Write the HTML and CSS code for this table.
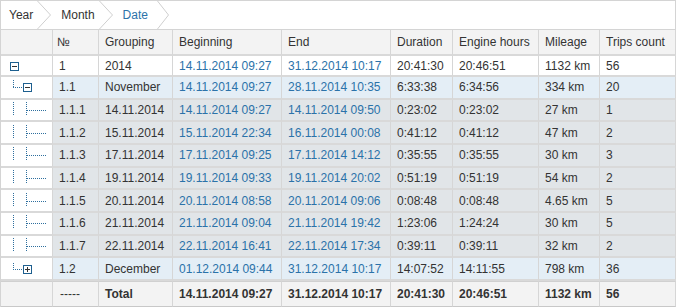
FILE: index.html
```html
<!DOCTYPE html>
<html>
<head>
<meta charset="utf-8">
<link rel="stylesheet" href="styles.css">
</head>
<body>
<div class="grid">
  <div class="crumbs">
    <span class="crumb first">Year</span>
    <svg class="chev" width="14" height="28" viewBox="0 0 14 28"><polyline points="0.5,0 13.5,14 0.5,28" fill="none" stroke="#cfcfcf" stroke-width="1"/></svg>
    <span class="crumb">Month</span>
    <svg class="chev" width="14" height="28" viewBox="0 0 14 28"><polyline points="0.5,0 13.5,14 0.5,28" fill="none" stroke="#cfcfcf" stroke-width="1"/></svg>
    <span class="crumb active">Date</span>
    <svg class="chev last" width="12" height="28" viewBox="0 0 12 28"><polyline points="0.5,0 11.5,14 0.5,28" fill="none" stroke="#cfcfcf" stroke-width="1"/></svg>
  </div>
  <table class="report">
    <thead>
      <tr>
        <th class="c-tree"></th>
        <th class="c-num">№</th>
        <th class="c-grp">Grouping</th>
        <th class="c-beg">Beginning</th>
        <th class="c-end">End</th>
        <th class="c-dur">Duration</th>
        <th class="c-eng">Engine hours</th>
        <th class="c-mil">Mileage</th>
        <th class="c-trp">Trips count</th>
      </tr>
    </thead>
    <tbody>
      <tr class="lvl0">
        <td class="tree"><svg class="tico" width="51" height="19" viewBox="0 0 51 19"><rect x="9.5" y="6.5" width="8" height="8" fill="#fff" stroke="#1d5f8f"/><line x1="11" y1="10.5" x2="16" y2="10.5" stroke="#333"/></svg></td>
        <td>1</td><td>2014</td>
        <td class="link">14.11.2014 09:27</td><td class="link">31.12.2014 10:17</td>
        <td>20:41:30</td><td>20:46:51</td><td>1132 km</td><td>56</td>
      </tr>
      <tr class="lvl1">
        <td class="tree"><svg class="tico" width="51" height="20" viewBox="0 0 51 20"><line x1="12.5" y1="3" x2="12.5" y2="11" stroke="#2e6f9e" stroke-dasharray="1 1"/><line x1="12" y1="10.5" x2="22" y2="10.5" stroke="#2e6f9e" stroke-dasharray="1 1"/><rect x="22.5" y="6.5" width="8" height="8" fill="#fff" stroke="#1d5f8f"/><line x1="24" y1="10.5" x2="29" y2="10.5" stroke="#333"/></svg></td>
        <td>1.1</td><td>November</td>
        <td class="link">14.11.2014 09:27</td><td class="link">28.11.2014 10:35</td>
        <td>6:33:38</td><td>6:34:56</td><td>334 km</td><td>20</td>
      </tr>
      <tr class="lvl2">
        <td class="tree"><svg class="tico" width="51" height="20" viewBox="0 0 51 20"><line x1="12.5" y1="2" x2="12.5" y2="16" stroke="#2e6f9e" stroke-dasharray="1 1"/><line x1="25.5" y1="2" x2="25.5" y2="16" stroke="#2e6f9e" stroke-dasharray="1 1"/><line x1="26" y1="10.5" x2="46" y2="10.5" stroke="#2e6f9e" stroke-dasharray="1 1"/></svg></td>
        <td>1.1.1</td><td>14.11.2014</td>
        <td class="link">14.11.2014 09:27</td><td class="link">14.11.2014 09:50</td>
        <td>0:23:02</td><td>0:23:02</td><td>27 km</td><td>1</td>
      </tr>
      <tr class="lvl2">
        <td class="tree"><svg class="tico" width="51" height="20" viewBox="0 0 51 20"><line x1="12.5" y1="2" x2="12.5" y2="16" stroke="#2e6f9e" stroke-dasharray="1 1"/><line x1="25.5" y1="2" x2="25.5" y2="16" stroke="#2e6f9e" stroke-dasharray="1 1"/><line x1="26" y1="10.5" x2="46" y2="10.5" stroke="#2e6f9e" stroke-dasharray="1 1"/></svg></td>
        <td>1.1.2</td><td>15.11.2014</td>
        <td class="link">15.11.2014 22:34</td><td class="link">16.11.2014 00:08</td>
        <td>0:41:12</td><td>0:41:12</td><td>47 km</td><td>2</td>
      </tr>
      <tr class="lvl2">
        <td class="tree"><svg class="tico" width="51" height="20" viewBox="0 0 51 20"><line x1="12.5" y1="2" x2="12.5" y2="16" stroke="#2e6f9e" stroke-dasharray="1 1"/><line x1="25.5" y1="2" x2="25.5" y2="16" stroke="#2e6f9e" stroke-dasharray="1 1"/><line x1="26" y1="10.5" x2="46" y2="10.5" stroke="#2e6f9e" stroke-dasharray="1 1"/></svg></td>
        <td>1.1.3</td><td>17.11.2014</td>
        <td class="link">17.11.2014 09:25</td><td class="link">17.11.2014 14:12</td>
        <td>0:35:55</td><td>0:35:55</td><td>30 km</td><td>3</td>
      </tr>
      <tr class="lvl2">
        <td class="tree"><svg class="tico" width="51" height="20" viewBox="0 0 51 20"><line x1="12.5" y1="2" x2="12.5" y2="16" stroke="#2e6f9e" stroke-dasharray="1 1"/><line x1="25.5" y1="2" x2="25.5" y2="16" stroke="#2e6f9e" stroke-dasharray="1 1"/><line x1="26" y1="10.5" x2="46" y2="10.5" stroke="#2e6f9e" stroke-dasharray="1 1"/></svg></td>
        <td>1.1.4</td><td>19.11.2014</td>
        <td class="link">19.11.2014 09:33</td><td class="link">19.11.2014 20:02</td>
        <td>0:51:19</td><td>0:51:19</td><td>54 km</td><td>2</td>
      </tr>
      <tr class="lvl2">
        <td class="tree"><svg class="tico" width="51" height="20" viewBox="0 0 51 20"><line x1="12.5" y1="2" x2="12.5" y2="16" stroke="#2e6f9e" stroke-dasharray="1 1"/><line x1="25.5" y1="2" x2="25.5" y2="16" stroke="#2e6f9e" stroke-dasharray="1 1"/><line x1="26" y1="10.5" x2="46" y2="10.5" stroke="#2e6f9e" stroke-dasharray="1 1"/></svg></td>
        <td>1.1.5</td><td>20.11.2014</td>
        <td class="link">20.11.2014 08:58</td><td class="link">20.11.2014 09:06</td>
        <td>0:08:48</td><td>0:08:48</td><td>4.65 km</td><td>5</td>
      </tr>
      <tr class="lvl2">
        <td class="tree"><svg class="tico" width="51" height="20" viewBox="0 0 51 20"><line x1="12.5" y1="2" x2="12.5" y2="16" stroke="#2e6f9e" stroke-dasharray="1 1"/><line x1="25.5" y1="2" x2="25.5" y2="16" stroke="#2e6f9e" stroke-dasharray="1 1"/><line x1="26" y1="10.5" x2="46" y2="10.5" stroke="#2e6f9e" stroke-dasharray="1 1"/></svg></td>
        <td>1.1.6</td><td>21.11.2014</td>
        <td class="link">21.11.2014 09:04</td><td class="link">21.11.2014 19:42</td>
        <td>1:23:06</td><td>1:24:24</td><td>30 km</td><td>5</td>
      </tr>
      <tr class="lvl2">
        <td class="tree"><svg class="tico" width="51" height="20" viewBox="0 0 51 20"><line x1="12.5" y1="2" x2="12.5" y2="16" stroke="#2e6f9e" stroke-dasharray="1 1"/><line x1="25.5" y1="2" x2="25.5" y2="16" stroke="#2e6f9e" stroke-dasharray="1 1"/><line x1="26" y1="10.5" x2="46" y2="10.5" stroke="#2e6f9e" stroke-dasharray="1 1"/></svg></td>
        <td>1.1.7</td><td>22.11.2014</td>
        <td class="link">22.11.2014 16:41</td><td class="link">22.11.2014 17:34</td>
        <td>0:39:11</td><td>0:39:11</td><td>32 km</td><td>2</td>
      </tr>
      <tr class="lvl1">
        <td class="tree"><svg class="tico" width="51" height="20" viewBox="0 0 51 20"><line x1="12.5" y1="4" x2="12.5" y2="11" stroke="#2e6f9e" stroke-dasharray="1 1"/><line x1="12" y1="10.5" x2="22" y2="10.5" stroke="#2e6f9e" stroke-dasharray="1 1"/><rect x="22.5" y="6.5" width="8" height="8" fill="#fff" stroke="#1d5f8f"/><line x1="24" y1="10.5" x2="29" y2="10.5" stroke="#333"/><line x1="26.5" y1="8" x2="26.5" y2="13" stroke="#333"/></svg></td>
        <td>1.2</td><td>December</td>
        <td class="link">01.12.2014 09:44</td><td class="link">31.12.2014 10:17</td>
        <td>14:07:52</td><td>14:11:55</td><td>798 km</td><td>36</td>
      </tr>
    </tbody>
    <tfoot>
      <tr class="total">
        <td class="tree"></td>
        <td class="dash">-----</td><td>Total</td>
        <td>14.11.2014 09:27</td><td>31.12.2014 10:17</td>
        <td>20:41:30</td><td>20:46:51</td><td>1132 km</td><td>56</td>
      </tr>
    </tfoot>
  </table>
</div>
</body>
</html>
```
FILE: styles.css
```css
html, body {
  margin: 0;
  padding: 0;
  background: #fff;
}
body {
  font-family: "Liberation Sans", Arial, sans-serif;
  font-size: 12px;
  color: #333;
}
.grid {
  width: 676px;
}
.crumbs {
  display: flex;
  align-items: flex-end;
  box-sizing: border-box;
  height: 29px;
  border: 1px solid #d4d4d4;
  border-bottom: none;
}
.crumb {
  line-height: 28px;
  height: 28px;
  padding: 0 0 0 10px;
}
.crumb.first {
  padding-left: 8px;
}
.crumb.active {
  color: #2b72a9;
}
.chev {
  display: block;
  margin-left: 4px;
}
.chev.last {
  margin-left: 9px;
}
.report {
  width: 676px;
  table-layout: fixed;
  border-collapse: separate;
  border-spacing: 0;
  border-top: 1px solid #d4d4d4;
  border-left: 1px solid #d4d4d4;
}
.report th,
.report td {
  box-sizing: border-box;
  border-right: 1px solid #d6d6d6;
  border-bottom: 2px solid #d9d9d9;
  padding: 0 0 0 6px;
  text-align: left;
  vertical-align: middle;
  white-space: nowrap;
  overflow: hidden;
  line-height: 14px;
}
.report th {
  height: 26px;
  font-weight: normal;
  background: #f3f3f3;
  color: #333;
}
.c-tree { width: 52px; }
.c-num { width: 46px; }
.c-grp { width: 74px; }
.c-beg { width: 109px; }
.c-end { width: 109px; }
.c-dur { width: 62px; }
.c-eng { width: 86px; }
.c-mil { width: 61px; }
.c-trp { width: 76px; }
.report th.c-num { padding-left: 4px; }
.report td.tree {
  padding: 0;
  background: #fff;
}
.tico {
  display: block;
}
.lvl0 td {
  height: 21px;
  background: #fff;
}
.lvl1 td {
  height: 22.67px;
  background: #e4eef6;
}
.lvl2 td {
  height: 22.67px;
  background: #e1e5e8;
}
.link {
  color: #2b72a9;
}
.total td {
  height: 26px;
  background: #f3f3f3;
  font-weight: bold;
  border-top: 1px solid #d0d0d0;
  border-bottom: 1px solid #c8c8c8;
}
.total td.tree {
  background: #f3f3f3;
}
.total td.dash {
  font-weight: normal;
  padding-left: 7px;
}
```
